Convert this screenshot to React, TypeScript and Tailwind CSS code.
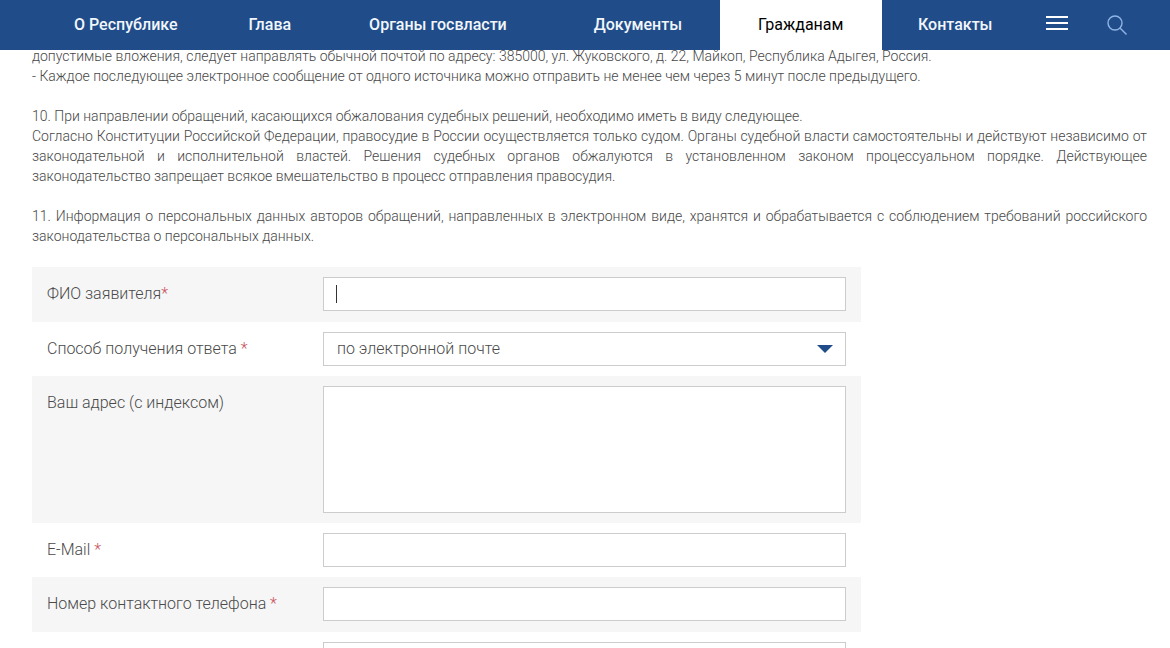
export default function App() {
  const navLink = "text-[#f2f6fb] font-medium text-[16px]";
  const rowBase = "flex pl-[15px] pr-[15px] w-[829px]";
  const inputCls = "block w-[523px] h-[34px] border border-[#cccccc] bg-white shrink-0";
  const labelCls = "w-[276px] shrink-0 pt-[6px] text-[16px] leading-[22px] text-[#4a4a4a] font-light";
  const Star = () => <span className="text-[#c9505a]">*</span>;
  return (
    <div className="h-[648px] overflow-hidden bg-white font-['Roboto',sans-serif]">
      <header className="relative z-10 h-[50px] bg-[#204d89] flex items-center">
        <a className={`${navLink} ml-[74px]`}>О Республике</a>
        <a className={`${navLink} ml-[71px]`}>Глава</a>
        <a className={`${navLink} ml-[78px]`}>Органы госвласти</a>
        <a className={`${navLink} ml-[87px]`}>Документы</a>
        <a className="ml-[38px] h-full w-[162px] pl-[38px] bg-white text-black text-[16px] flex items-center">Гражданам</a>
        <a className={`${navLink} ml-[36px]`}>Контакты</a>
        <div className="ml-[54px] w-[22px] flex flex-col gap-[4px] -mt-[4px]">
          <span className="h-[2px] bg-white" />
          <span className="h-[2px] bg-white" />
          <span className="h-[2px] bg-white" />
        </div>
        <svg className="ml-[39px]" width="20" height="20" viewBox="0 0 20 20" fill="none" stroke="#8fb4e5" strokeWidth="1.4">
          <circle cx="8" cy="8" r="7" />
          <path d="M13 13 L19.5 19.5" />
        </svg>
      </header>
      <main className="-mt-1 px-[32px] pr-[23px] text-[14px] leading-[20px] font-light text-[#484848]">
        <p>допустимые вложения, следует направлять обычной почтой по адресу: 385000, ул. Жуковского, д. 22, Майкоп, Республика Адыгея, Россия.</p>
        <p>- Каждое последующее электронное сообщение от одного источника можно отправить не менее чем через 5 минут после предыдущего.</p>
        <p className="mt-5">10. При направлении обращений, касающихся обжалования судебных решений, необходимо иметь в виду следующее.</p>
        <p className="text-justify">Согласно Конституции Российской Федерации, правосудие в России осуществляется только судом. Органы судебной власти самостоятельны и действуют независимо от законодательной и исполнительной властей. Решения судебных органов обжалуются в установленном законом процессуальном порядке. Действующее законодательство запрещает всякое вмешательство в процесс отправления правосудия.</p>
        <p className="mt-5 text-justify">11. Информация о персональных данных авторов обращений, направленных в электронном виде, хранятся и обрабатывается с соблюдением требований российского законодательства о персональных данных.</p>
        <form className="mt-[21px]">
          <div className={`${rowBase} h-[55px] bg-[#f6f6f6] items-start pt-[10px]`}>
            <label className={labelCls}>ФИО заявителя<Star /></label>
            <div className={`${inputCls} flex items-center pl-[12px]`}><span className="block w-px h-[18px] bg-[#333]" /></div>
          </div>
          <div className={`${rowBase} h-[54px] items-start pt-[10px]`}>
            <label className={labelCls}>Способ получения ответа <Star /></label>
            <div className={`${inputCls} flex items-center justify-between pl-[13px] pr-[12px] text-[16px] font-light text-[#4a4a4a]`}>
              <span>по электронной почте</span>
              <svg width="16" height="8" viewBox="0 0 16 8"><path d="M0 0H16L8 8Z" fill="#204d89" /></svg>
            </div>
          </div>
          <div className={`${rowBase} h-[147px] bg-[#f6f6f6] items-start pt-[10px]`}>
            <label className={labelCls}>Ваш адрес (с индексом)</label>
            <div className="w-[523px] h-[127px] border border-[#cccccc] bg-white shrink-0" />
          </div>
          <div className={`${rowBase} h-[54px] items-start pt-[10px]`}>
            <label className={labelCls}>E-Mail <Star /></label>
            <div className={inputCls} />
          </div>
          <div className={`${rowBase} h-[55px] bg-[#f6f6f6] items-start pt-[10px]`}>
            <label className={labelCls}>Номер контактного телефона <Star /></label>
            <div className={inputCls} />
          </div>
          <div className={`${rowBase} h-[54px] items-start pt-[10px]`}>
            <div className="w-[276px] shrink-0" />
            <div className={inputCls} />
          </div>
        </form>
      </main>
    </div>
  );
}
